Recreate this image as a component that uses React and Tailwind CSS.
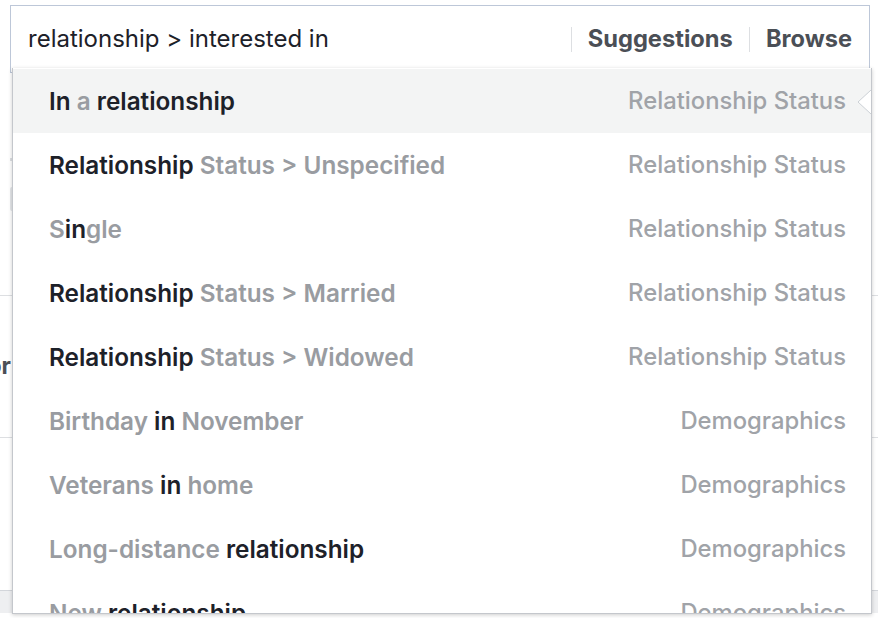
import React from "react";

const D = "text-[#1d2129]";
const G = "text-[#999ca1]";

const rows = [
  { parts: [["In", D], [" a", G], [" relationship", D]], cat: "Relationship Status", active: true },
  { parts: [["Relationship", D], [" Status > Unspecified", G]], cat: "Relationship Status" },
  { parts: [["S", G], ["in", D], ["gle", G]], cat: "Relationship Status" },
  { parts: [["Relationship", D], [" Status > Married", G]], cat: "Relationship Status" },
  { parts: [["Relationship", D], [" Status > Widowed", G]], cat: "Relationship Status" },
  { parts: [["Birthday", G], [" in", D], [" November", G]], cat: "Demographics" },
  { parts: [["Veterans", G], [" in", D], [" home", G]], cat: "Demographics" },
  { parts: [["Long-distance", G], [" relationship", D]], cat: "Demographics" },
  { parts: [["New", G], [" relationship", D]], cat: "Demographics" },
];

export default function App() {
  return (
    <div className="relative w-[878px] h-[618px] bg-white overflow-hidden font-['Inter',sans-serif]">
      {/* search input */}
      <div className="mt-[5px] ml-[10px] w-[860px] h-[68px] border border-[#bdc7d8] bg-white flex items-center pl-[17px] pr-[17px]">
        <div className="flex-1 text-[24px] text-[#1d2129] whitespace-nowrap">relationship &gt; interested in</div>
        <div className="w-px h-[25px] bg-[#dddfe2]" />
        <div className="px-[16px] text-[23.7px] font-bold text-[#4b4f56]">Suggestions</div>
        <div className="w-px h-[25px] bg-[#dddfe2]" />
        <div className="pl-[16px] text-[23.6px] font-bold text-[#4b4f56]">Browse</div>
      </div>

      {/* page content behind dropdown */}
      <div className="h-[85px]" />
      <div className="ml-[10px] w-[2px] h-[3px] bg-[#dddfe2]" />
      <div className="h-[26px]" />
      <div className="ml-[10px] w-[300px] h-[24px] rounded-[2px] bg-[#e4e6e9]" />
      <div className="h-[84px]" />
      <div className="h-px bg-[#dddfe2]" />
      <div className="h-[58px]" />
      <div className="w-[11px] h-[24px] flex justify-end overflow-hidden text-[23px] leading-[24px] font-bold text-[#4b4f56]">
        <span className="whitespace-nowrap">or</span>
      </div>
      <div className="h-[59px]" />
      <div className="h-px bg-[#dddfe2]" />
      <div className="h-[152px]" />
      <div className="h-[23px] border-t border-[#d3d6db] bg-[#eeeff1]" />

      {/* dropdown */}
      <div className="absolute left-[12px] top-[68px] w-[860px] h-[546px] bg-white border-x border-b border-[#c4c7cc] shadow-[0_1px_4px_rgba(0,0,0,0.2)] overflow-hidden">
        <div className="h-px" />
        {rows.map((r, i) => (
          <div
            key={i}
            className={`relative h-[64px] flex items-center justify-between pl-[36px] pr-[25px] font-semibold text-[24.3px] whitespace-nowrap ${r.active ? "bg-[#f3f4f4]" : ""}`}
          >
            <div>
              {r.parts.map(([t, c], j) => (
                <span key={j} className={c}>{t}</span>
              ))}
            </div>
            <div className="text-[#a0a3a8] font-medium text-[23.8px]">{r.cat}</div>
            {r.active && (
              <svg className="absolute right-0 top-[21px]" width="14" height="24" viewBox="0 0 14 24">
                <path d="M14 0 L1 12 L14 24 Z" fill="#ffffff" />
                <path d="M14 0 L1 12 L14 24" fill="none" stroke="#ccd0d5" strokeWidth="1" />
              </svg>
            )}
          </div>
        ))}
      </div>
    </div>
  );
}
